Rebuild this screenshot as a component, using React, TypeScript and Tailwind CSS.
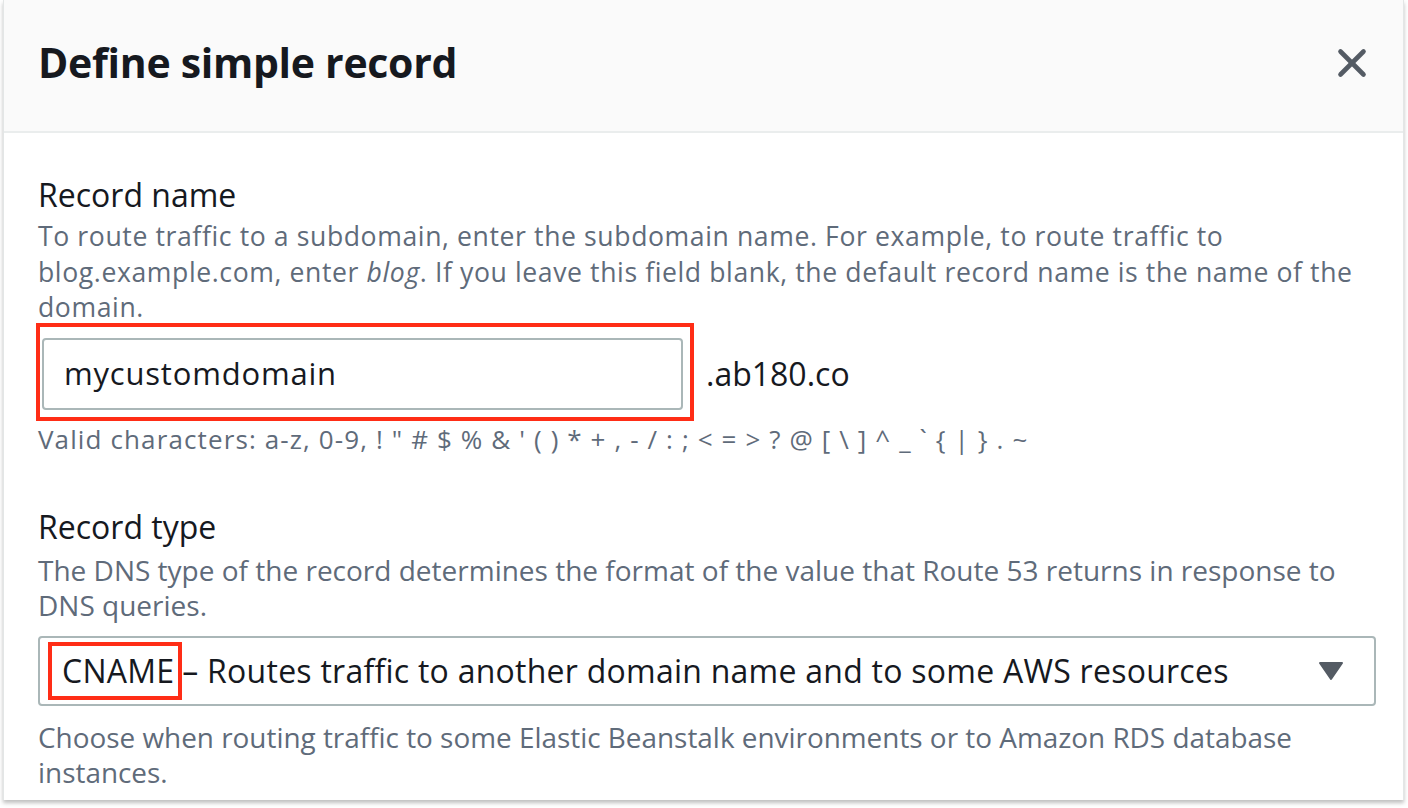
import { X } from "lucide-react";

const font = { fontFamily: '"Open Sans", "Noto Sans", sans-serif' };

export default function App() {
  return (
    <div className="h-[808px] w-[1408px] bg-white" style={font}>
      <div className="ml-[3px] h-[800px] w-[1401px] border-x border-[#e3e6e6] bg-white shadow-[0_3px_4px_rgba(0,0,0,0.25)]">
        <div className="flex h-[133px] items-center justify-between border-b-2 border-[#eaeded] bg-[#fafafa] pb-[6px] pl-[34px] pr-[28px]">
          <h1 className="text-[41px] font-bold tracking-[-0.3px] text-[#16191f]">Define simple record</h1>
          <X className="h-[46px] w-[46px] text-[#545b64]" strokeWidth={2.4} />
        </div>

        <div className="pl-[34px] pr-[20px] pt-[44px]">
          <div className="text-[32px] leading-[36px] text-[#16191f]">Record name</div>
          <p className="mt-[6px] whitespace-nowrap text-[26.6px] leading-[35.5px] tracking-[0.6px] text-[#5f6b7a]">
            To route traffic to a subdomain, enter the subdomain name. For example, to route traffic to
            <br />
            blog.example.com, enter <i>blog</i>. If you leave this field blank, the default record name is the name of the
            <br />
            domain.
          </p>

          <div className="mt-[12px] flex items-center">
            <div className="relative ml-[4px] h-[72px] w-[641px] rounded-[4px] border-2 border-[#aab7b8] bg-white">
              <div className="flex h-full items-center pl-[20px] text-[31px] tracking-[0.8px] text-[#16191f]">
                mycustomdomain
              </div>
              <div className="pointer-events-none absolute -left-[8px] -top-[17px] h-[98px] w-[658px] border-4 border-[#ff2d16]" />
            </div>
            <span className="ml-[23px] text-[32px] text-[#16191f]">.ab180.co</span>
          </div>

          <div className="mt-[12px] whitespace-nowrap text-[26px] leading-[34px] tracking-[1.12px] text-[#5f6b7a]">
            Valid characters: a-z, 0-9, ! " # $ % &amp; ' ( ) * + , - / : ; &lt; = &gt; ? @ [ \ ] ^ _ ` {"{"} | {"}"} . ~
          </div>

          <div className="mt-[53px] text-[32px] leading-[36px] text-[#16191f]">Record type</div>
          <p className="mt-[8px] whitespace-nowrap text-[28px] leading-[35.5px] text-[#5f6b7a]">
            The DNS type of the record determines the format of the value that Route 53 returns in response to
            <br />
            DNS queries.
          </p>

          <div className="mt-[12px] flex h-[70px] w-[1338px] items-center justify-between rounded-[4px] border-2 border-[#aab7b8] bg-white pl-[8px] pr-[30px]">
            <div className="flex items-center text-[32px] tracking-[0.25px] text-[#16191f]">
              <span className="border-4 border-[#ff2d16] pl-[10px] pr-[4px] py-[1px]">CNAME</span>
              <span>– Routes traffic to another domain name and to some AWS resources</span>
            </div>
            <svg width="26" height="20" viewBox="0 0 26 20">
              <path d="M2 2 H24 L13 18 Z" fill="#545b64" stroke="#545b64" strokeWidth="2" strokeLinejoin="round" />
            </svg>
          </div>

          <p className="mt-[14px] whitespace-nowrap text-[27.9px] leading-[35px] text-[#5f6b7a]">
            Choose when routing traffic to some Elastic Beanstalk environments or to Amazon RDS database
            <br />
            instances.
          </p>
        </div>
      </div>
    </div>
  );
}
